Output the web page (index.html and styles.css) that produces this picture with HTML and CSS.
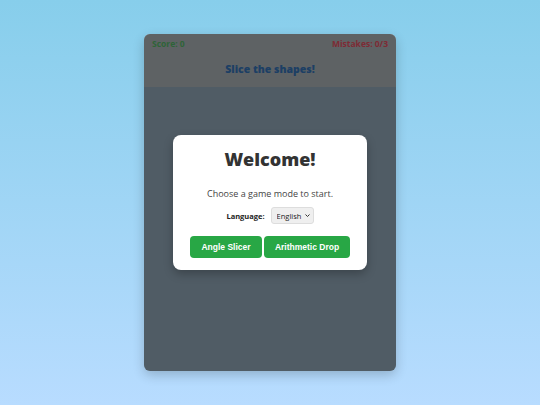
FILE: index.html
```html
<!DOCTYPE html>
<html lang="en">
<head>
    <meta charset="UTF-8">
    <meta name="viewport" content="width=device-width, initial-scale=1.0">
    <title>Shape Slicer</title>
    <link rel="stylesheet" href="styles.css">
</head>
<body>
    <div class="game" id="game">
        <div class="hud">
            <div class="stats">
                <span class="score" id="score">Score: 0</span>
                <span class="mistakes" id="mistakes">Mistakes: 0/3</span>
            </div>
            <h2 class="prompt" id="prompt">Slice the shapes!</h2>
        </div>
        <div class="board" id="board"></div>

        <div class="overlay" id="startScreen">
            <div class="modal">
                <h1>Welcome!</h1>
                <p>Choose a game mode to start.</p>
                <div class="lang-row">
                    <label for="language">Language:</label>
                    <span class="select-wrap">
                        <select id="language">
                            <option>English</option>
                            <option>Español</option>
                        </select>
                        <svg class="chevron" viewBox="0 0 10 6" width="5" height="3">
                            <path d="M1 1l4 4 4-4" fill="none" stroke="#333" stroke-width="2"/>
                        </svg>
                    </span>
                </div>
                <div class="modes">
                    <button class="mode-btn" id="angleBtn">Angle Slicer</button>
                    <button class="mode-btn" id="mathBtn">Arithmetic Drop</button>
                </div>
            </div>
        </div>
    </div>
</body>
</html>
```

FILE: styles.css
```css
body {
    font-family: "Open Sans", "DejaVu Sans", sans-serif;
    display: flex;
    justify-content: center;
    align-items: center;
    height: 100vh;
    margin: 0;
    background: linear-gradient(to bottom, #87ceeb, #b8dcff);
}
.game {
    position: relative;
    display: flex;
    flex-direction: column;
    width: 252px;
    height: 337px;
    border-radius: 6px;
    overflow: hidden;
    background: #a0b8ca;
    box-shadow: 0 4px 12px rgba(0, 0, 0, 0.2);
}
.hud {
    height: 53px;
    box-sizing: border-box;
    padding: 4px 8px 0;
    background: #bcc4c8;
}
.stats {
    display: flex;
    justify-content: space-between;
    font-size: 8.5px;
    font-weight: 700;
    line-height: 12px;
}
.score {
    color: #5cc870;
}
.mistakes {
    color: #fa566a;
}
.prompt {
    margin: 12px 0 0;
    text-align: center;
    font-size: 10.5px;
    font-weight: 800;
    color: #3a7ec8;
}
.board {
    flex: 1;
}
.overlay {
    position: absolute;
    inset: 0;
    display: flex;
    justify-content: center;
    align-items: center;
    background: rgba(0, 0, 0, 0.5);
}
.modal {
    width: 194px;
    height: 135px;
    box-sizing: border-box;
    padding: 12px 17px 0;
    background: #fff;
    border-radius: 8px;
    box-shadow: 0 4px 10px rgba(0, 0, 0, 0.25);
    text-align: center;
    color: #333;
}
.modal h1 {
    margin: 0;
    font-size: 18px;
    line-height: 24px;
    font-weight: 800;
}
.modal p {
    margin: 17px 0 0;
    font-size: 9px;
    line-height: 12px;
    color: #444;
}
.lang-row {
    display: flex;
    justify-content: center;
    align-items: center;
    gap: 6px;
    margin-top: 7px;
    font-size: 7.5px;
    font-weight: 700;
    color: #222;
}
.select-wrap {
    position: relative;
    display: flex;
}
.lang-row select {
    appearance: none;
    width: 43px;
    height: 17px;
    padding: 0 0 0 5px;
    font-family: inherit;
    font-size: 7.5px;
    font-weight: 400;
    border: 1px solid #ddd;
    border-radius: 3px;
    background: #efefef;
    color: #222;
}
.chevron {
    position: absolute;
    right: 4px;
    top: 7px;
    pointer-events: none;
}
.modes {
    display: flex;
    justify-content: center;
    gap: 2px;
    margin-top: 12px;
}
.mode-btn {
    height: 22px;
    padding: 0;
    white-space: nowrap;
    border: none;
    border-radius: 4px;
    background: #28a745;
    color: #fff;
    font-family: "Liberation Sans", Arial, sans-serif;
    font-size: 8.5px;
    font-weight: 700;
}
.mode-btn:first-child {
    width: 72px;
}
.mode-btn:last-child {
    width: 86px;
}
```
